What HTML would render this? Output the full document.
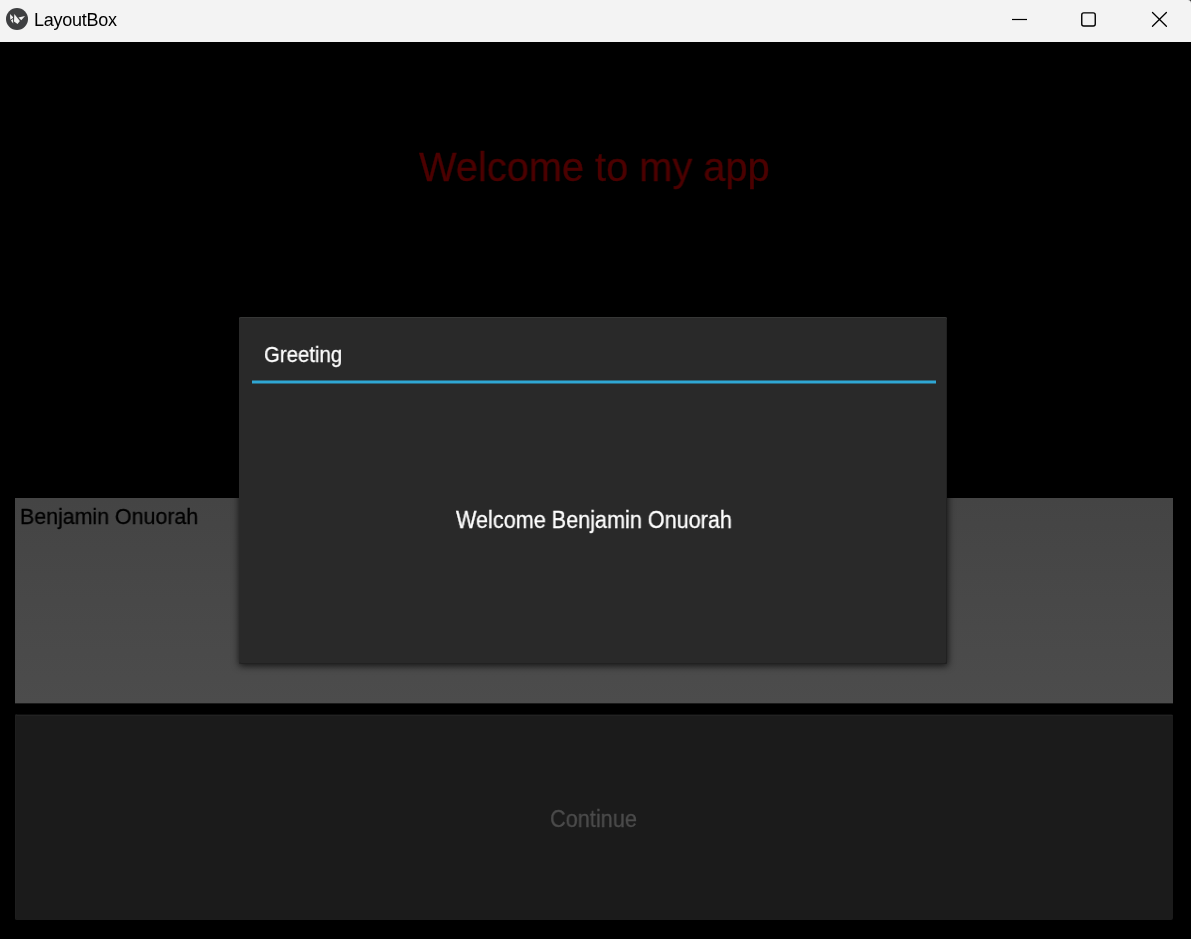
<!DOCTYPE html>
<html><head><meta charset="utf-8">
<style>
html,body{margin:0;padding:0;width:1191px;height:939px;overflow:hidden;background:#000;font-family:"Liberation Sans",sans-serif;}
.abs{position:absolute;}
.t{position:absolute;white-space:nowrap;line-height:1;transform-origin:0 0;will-change:transform;}
.k{-webkit-text-stroke:0.3px currentColor;}
#titlebar{left:0;top:0;width:1191px;height:41px;background:#f3f3f3;}
#tbline{left:0;top:41px;width:1191px;height:1px;background:#f3f3f3;}
#input{left:15px;top:498px;width:1158px;height:205px;background:linear-gradient(#444444,#4c4c4c);box-shadow:0 1px 0 rgba(76,76,76,.35);}
#button{left:15px;top:714px;width:1158px;height:206px;background:linear-gradient(#0e0e0e 0 1px,#222 1px 2px,#1b1b1b 2px);border-radius:2px;box-shadow:inset 1px 0 0 #1e1e1e;}
#popup{left:239px;top:317px;width:708px;height:347px;background:#292929;border-radius:2px;box-shadow:0.5px 1.5px 7px rgba(0,0,0,.72), inset 0 1px 0 #363736, inset 1px 0 0 #2a2a2a, inset -1px 0 0 #212121, inset 0 -1px 0 #212121;}
#sep{left:252px;top:380px;width:684px;height:4px;background:linear-gradient(to bottom, rgba(47,167,212,.5) 0 1px, #2fa7d4 1px 3px, rgba(47,167,212,.5) 3px 4px);}
</style></head>
<body>
<div class="abs" id="titlebar"></div>
<div class="abs" id="tbline"></div>
<svg class="abs" style="left:0;top:0" width="1191" height="41">
  <circle cx="17" cy="19" r="11" fill="#3e3f41"/>
  <g fill="#f2f2f2">
    <polygon points="10,13.9 13,17 13,18.1 10.3,19.7"/>
    <polygon points="10.9,20.6 13,19 13.2,23.6"/>
    <polygon points="14.3,14 19.9,21 17.5,24 14,21.6"/>
    <polygon points="18.5,17.6 25,16 21.3,20.2"/>
  </g>
  <path d="M1012 19.5H1027" stroke="#000" stroke-width="1.2"/>
  <rect x="1081.75" y="12.9" width="13.5" height="13.1" rx="2" fill="none" stroke="#000" stroke-width="1.4"/>
  <path d="M1152.5 12.5L1166.4 26.2M1166.4 12.5L1152.5 26.2" stroke="#000" stroke-width="1.3" stroke-linecap="round"/>
  <path d="M1188 0H1191V3A3 3 0 0 0 1188 0Z" fill="#333"/>
</svg>
<div class="t" id="apptitle" style="left:34px;top:11px;font-size:18px;letter-spacing:-0.25px;color:#000">LayoutBox</div>
<div class="t k" id="heading" style="left:419px;top:147px;font-size:40px;color:#4c0000;transform:scaleX(0.994)">Welcome to my app</div>
<div class="abs" id="input"></div>
<div class="t k" id="inputtext" style="left:20.2px;top:505.5px;font-size:22px;color:#000;transform:scaleX(0.971)">Benjamin Onuorah</div>
<div class="abs" id="button"></div>
<div class="t k" id="btntext" style="left:550px;top:808px;font-size:23.5px;color:#4c4c4c;transform:scaleX(0.924)">Continue</div>
<div class="abs" id="popup"></div>
<div class="t k" id="ptitle" style="left:264px;top:344px;font-size:22.5px;color:#fff;transform:scaleX(0.906)">Greeting</div>
<div class="abs" id="sep"></div>
<div class="t k" id="pmsg" style="left:456.3px;top:509px;font-size:23px;color:#fff;transform:scaleX(0.94)">Welcome Benjamin Onuorah</div>
</body></html>
